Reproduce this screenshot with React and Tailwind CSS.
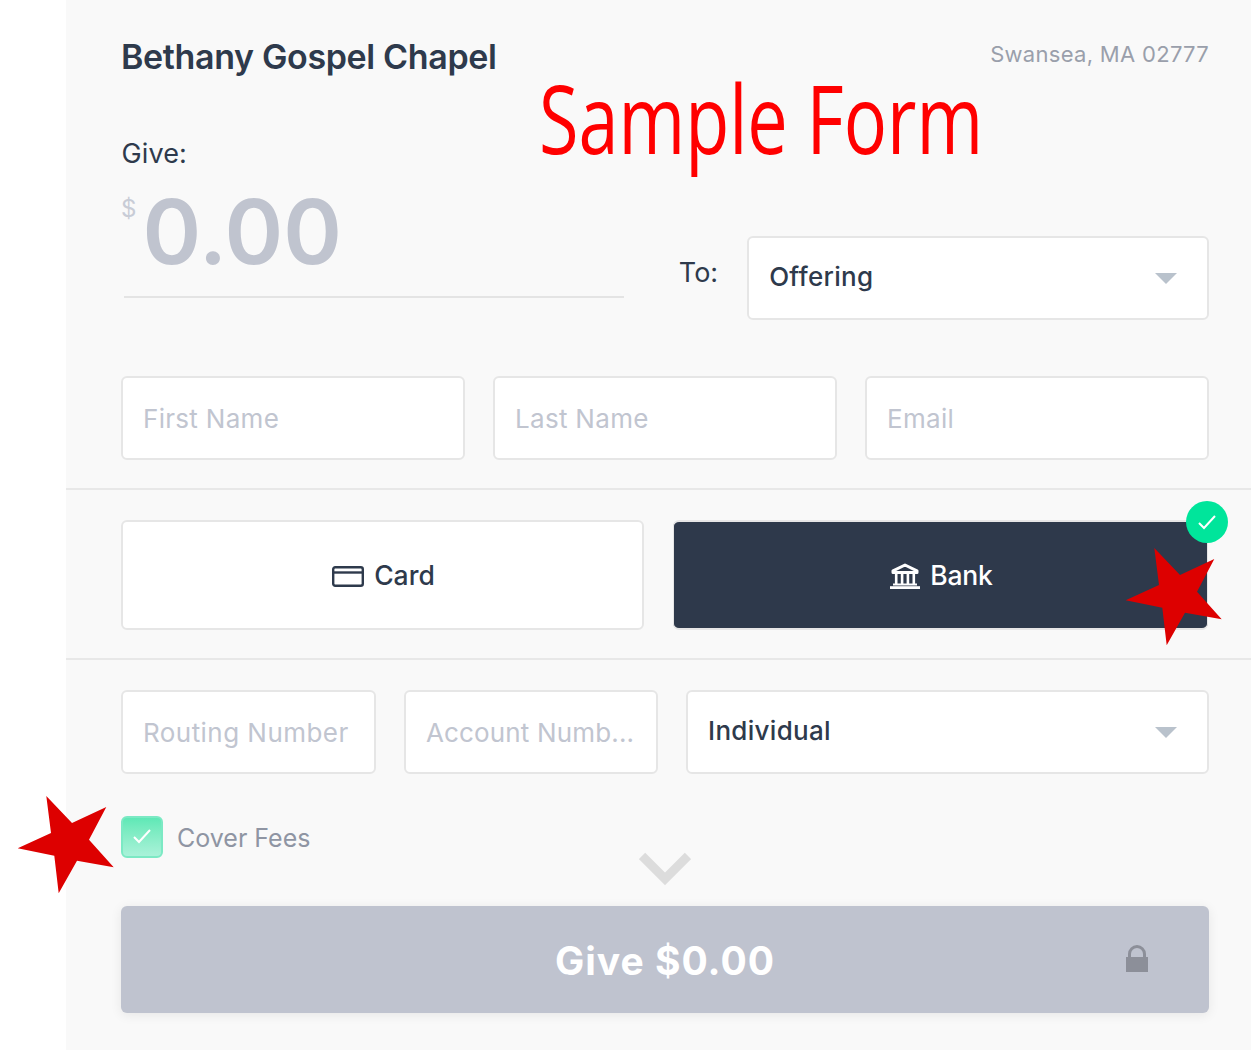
const Chevron = () => (
  <svg width="22" height="12" viewBox="0 0 22 12" className="shrink-0">
    <path d="M0 1h22L11 12z" fill="#b9c2cc" />
  </svg>
);

const Field = ({ placeholder, className = "tracking-[0.3px]" }) => (
  <input
    placeholder={placeholder}
    readOnly
    className={`h-[84px] min-w-0 rounded-md border-2 border-[#e6e6e6] bg-white px-[20px] text-[26px] outline-none placeholder:text-[#c1c5d0] ${className}`}
  />
);

const Select = ({ label, className = "" }) => (
  <div className={`flex h-[84px] items-center justify-between rounded-md border-2 border-[#e6e6e6] bg-white pl-[20px] pr-[30px] text-[26px] font-medium tracking-[0.3px] text-[#2e3a4c] ${className}`}>
    <span className="pb-[3px]">{label}</span>
    <Chevron />
  </div>
);

const Star = ({ className }) => (
  <svg viewBox="0 0 98 99" className={`absolute h-[99px] w-[98px] ${className}`}>
    <polygon points="29.3,1 55,28 89.3,12 72,44.7 96.7,72.3 60,65.7 41.7,98.3 37.3,60.7 0.7,53.3 34,38" fill="#dd0000" />
  </svg>
);

export default function App() {
  return (
    <div className="relative h-[1050px] w-[1251px] overflow-hidden bg-white font-['Inter',sans-serif]">
      <div className="ml-[66px] h-[1050px] bg-[#f9f9f9] text-[#2e3a4c]">
        <div className="pl-[55px] pr-[42px]">
          <div className="flex items-start justify-between pt-[35px]">
            <h1 className="text-[34px] font-semibold leading-[44px] tracking-[-0.35px]">Bethany Gospel Chapel</h1>
            <span className="pt-[3px] text-[22px] leading-[32px] tracking-[0.3px] text-[#9a9fab]">Swansea, MA 02777</span>
          </div>
          <div className="flex items-end pt-[57px]">
            <div className="w-[503px] pl-[3px]">
              <div className="-ml-[2.5px] text-[27px] leading-[36px] tracking-[0.1px]">Give:</div>
              <div className="flex h-[126px] items-start border-b-2 border-[#e4e4e4] pt-[20px]">
                <span className="-ml-[3px] pt-[1px] text-[24px] leading-[32px] text-[#c8ccd6]">$</span>
                <span className="ml-[6px] text-[89px] font-semibold leading-[80px] text-[#c0c4cf]">0.00</span>
              </div>
              <div className="h-[22px]" />
            </div>
            <span className="ml-[55px] pb-[29px] text-[27px] leading-[36px]">To:</span>
            <Select label="Offering" className="ml-[29px] w-[462px]" />
          </div>
          <div className="mt-[56px] grid grid-cols-3 gap-[28px]">
            <Field placeholder="First Name" />
            <Field placeholder="Last Name" />
            <Field placeholder="Email" />
          </div>
        </div>

        <div className="mt-[28px] border-y-2 border-[#e8e8e8] pb-[28px] pl-[55px] pr-[42px] pt-[30px]">
          <div className="grid grid-cols-[523px_535px] gap-[29px]">
            <button className="flex h-[110px] items-center justify-center gap-[10px] rounded-md border-2 border-[#e6e6e6] bg-white pl-[2px] pt-[2px] text-[26.5px] font-medium">
              <svg width="32" height="21" viewBox="0 0 32 21" fill="none" stroke="#2e3a4c" strokeWidth="2.4">
                <rect x="1.2" y="1.2" width="29.6" height="18.6" rx="2" />
                <path d="M1 6.5h30" />
              </svg>
              Card
            </button>
            <button className="relative flex h-[110px] items-center justify-center gap-[10px] rounded-md border-x border-y-2 border-[#e6e6e6] bg-[#2e394b] pl-[2px] pt-[2px] text-[26.5px] font-medium tracking-[-0.2px] text-white">
              <svg width="30" height="26" viewBox="0 0 30 26" fill="none" stroke="#ffffff">
                <path d="M15 2 3 7.8v1.7h24V7.8z" strokeWidth="3" strokeLinejoin="round" />
                <path d="M6.2 10v11M12.1 10v11M17.9 10v11M23.8 10v11" strokeWidth="2.6" />
                <path d="M3 21.5h24" strokeWidth="2" />
                <path d="M0 24.6h30" strokeWidth="2.8" />
              </svg>
              Bank
              <span className="absolute -right-[21px] -top-[21px] flex h-[42px] w-[42px] items-center justify-center rounded-full bg-[#00e59b]">
                <svg width="20" height="16" viewBox="0 0 20 16" fill="none" stroke="#ffffff" strokeWidth="2">
                  <path d="M2 9l5 5L18 2" />
                </svg>
              </span>
            </button>
          </div>
        </div>

        <div className="pl-[55px] pr-[42px] pt-[30px]">
          <div className="grid grid-cols-[255px_254px_523px] gap-[28px]">
            <Field placeholder="Routing Number" className="tracking-[0.45px]" />
            <Field placeholder="Account Numb..." className="tracking-[0.15px]" />
            <Select label="Individual" />
          </div>
          <div className="mt-[42px] flex items-center gap-[14px]">
            <span className="flex h-[42px] w-[42px] items-center justify-center rounded-md border-2 border-[#7ce9c4] bg-gradient-to-b from-[#5ee8b6] to-[#a9f2d9]">
              <svg width="20" height="16" viewBox="0 0 20 16" fill="none" stroke="#ffffff" strokeWidth="2">
                <path d="M2 8l5 5L18 1" />
              </svg>
            </span>
            <span className="pt-[3px] text-[25px] text-[#8f95a3]">Cover Fees</span>
          </div>
          <div className="-mt-[6px] flex justify-center">
            <svg width="52" height="34" viewBox="0 0 52 34" fill="none" stroke="#dcdcdc" strokeWidth="9">
              <path d="M3 4l23 23L49 4" />
            </svg>
          </div>
          <button className="relative mt-[20px] flex h-[107px] w-full items-center justify-center rounded-md bg-[#bfc3cf] pt-[4px] text-[39px] font-bold tracking-[1px] text-white shadow-[0_2px_12px_rgba(0,0,0,0.08)]">
            Give $0.00
            <svg width="24" height="28" viewBox="0 0 24 28" className="absolute right-[60px] top-[39px]">
              <path d="M4.5 13V9a7.5 7.5 0 0 1 15 0v4" fill="none" stroke="#8c8f99" strokeWidth="3" />
              <rect x="1" y="12" width="22" height="15" fill="#8c8f99" />
            </svg>
          </button>
        </div>
      </div>

      <div className="absolute left-[539px] top-[52px] origin-left scale-x-[0.75] whitespace-nowrap font-['Open_Sans',sans-serif] text-[96px] font-normal leading-[130px] text-[#ff0000]">
        Sample Form
      </div>
      <Star className="left-[1125px] top-[547px]" />
      <Star className="left-[17px] top-[795px]" />
    </div>
  );
}
